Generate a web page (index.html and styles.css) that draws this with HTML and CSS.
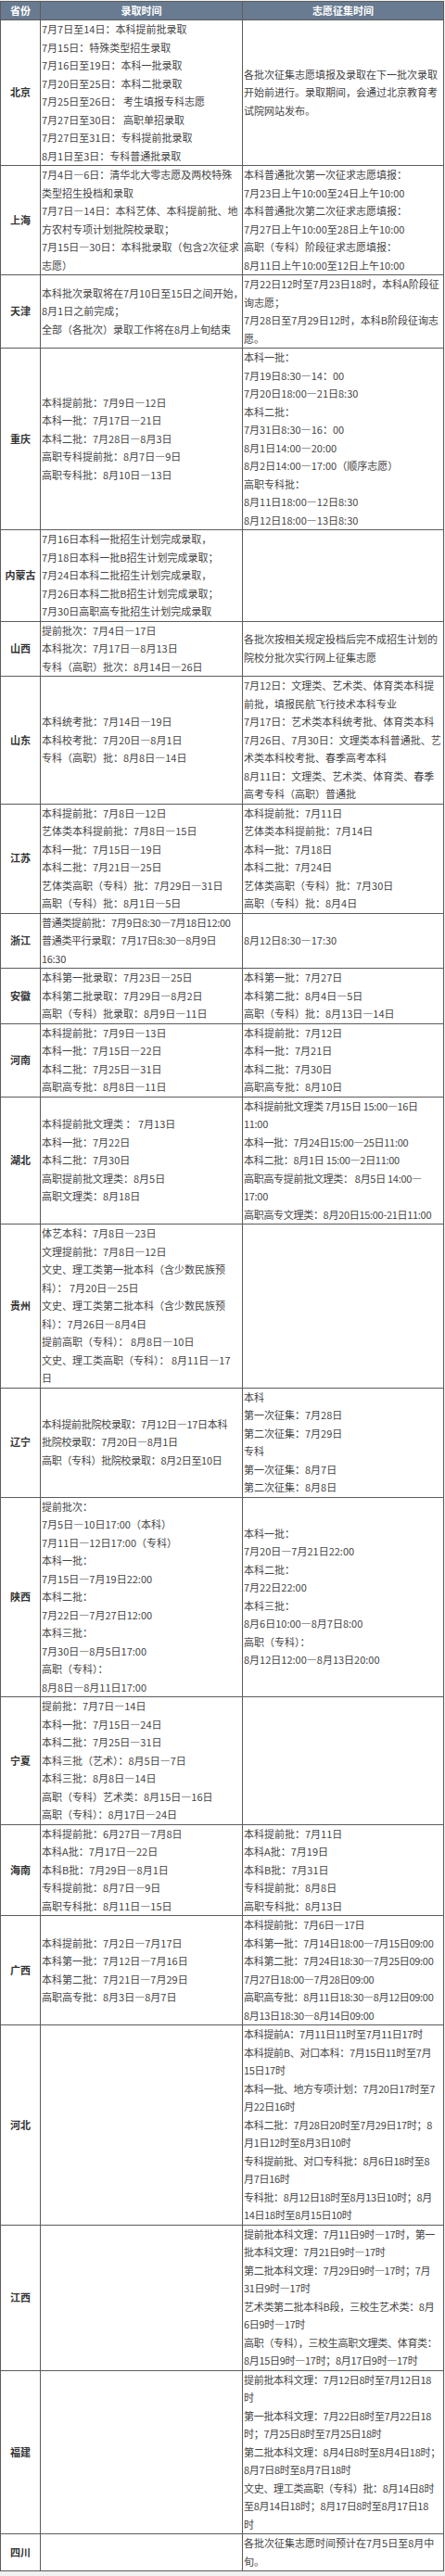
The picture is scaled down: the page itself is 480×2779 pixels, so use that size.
FILE: index.html
```html
<!DOCTYPE html>
<html lang="zh-CN">
<head>
<meta charset="utf-8">
<title>各省录取时间</title>
<link rel="stylesheet" href="styles.css">
</head>
<body>
<table class="sched">
<colgroup><col class="c-prov"><col class="c-adm"><col class="c-vol"></colgroup>
<thead>
<tr><th>省份</th><th>录取时间</th><th>志愿征集时间</th></tr>
</thead>
<tbody>
<tr>
<td class="prov">北京</td>
<td>7月7日至14日：本科提前批录取<br>7月15日：特殊类型招生录取<br>7月16日至19日：本科一批录取<br>7月20日至25日：本科二批录取<br>7月25日至26日： 考生填报专科志愿<br>7月27日至30日： 高职单招录取<br>7月27日至31日：专科提前批录取<br>8月1日至3日：专科普通批录取</td>
<td>各批次征集志愿填报及录取在下一批次录取<br>开始前进行。录取期间，会通过北京教育考<br>试院网站发布。</td>
</tr>
<tr>
<td class="prov">上海</td>
<td>7月4日—6日：清华北大零志愿及两校特殊<br>类型招生投档和录取<br>7月7日—14日：本科艺体、本科提前批、地<br>方农村专项计划批院校录取；<br>7月15日—30日：本科批录取（包含2次征求<br>志愿）</td>
<td>本科普通批次第一次征求志愿填报：<br>7月23日上午10:00至24日上午10:00<br>本科普通批次第二次征求志愿填报：<br>7月27日上午10:00至28日上午10:00<br>高职（专科）阶段征求志愿填报：<br>8月11日上午10:00至12日上午10:00</td>
</tr>
<tr>
<td class="prov">天津</td>
<td>本科批次录取将在7月10日至15日之间开始，<br>8月1日之前完成；<br>全部（各批次）录取工作将在8月上旬结束</td>
<td>7月22日12时至7月23日18时，本科A阶段征<br>询志愿；<br>7月28日至7月29日12时，本科B阶段征询志<br>愿。</td>
</tr>
<tr>
<td class="prov">重庆</td>
<td>本科提前批：7月9日—12日<br>本科一批：7月17日—21日<br>本科二批：7月28日—8月3日<br>高职专科提前批：8月7日—9日<br>高职专科批：8月10日—13日</td>
<td>本科一批：<br>7月19日8:30—14：00<br>7月20日18:00—21日8:30<br>本科二批：<br>7月31日8:30—16：00<br>8月1日14:00—20:00<br>8月2日14:00—17:00（顺序志愿）<br>高职专科批：<br>8月11日18:00—12日8:30<br>8月12日18:00—13日8:30</td>
</tr>
<tr>
<td class="prov">内蒙古</td>
<td>7月16日本科一批招生计划完成录取，<br>7月18日本科一批B招生计划完成录取；<br>7月24日本科二批招生计划完成录取，<br>7月26日本科二批B招生计划完成录取；<br>7月30日高职高专批招生计划完成录取</td>
<td></td>
</tr>
<tr>
<td class="prov">山西</td>
<td>提前批次：7月4日—17日<br>本科批次：7月17日—8月13日<br>专科（高职）批次：8月14日—26日</td>
<td>各批次按相关规定投档后完不成招生计划的<br>院校分批次实行网上征集志愿</td>
</tr>
<tr>
<td class="prov">山东</td>
<td>本科统考批：7月14日—19日<br>本科校考批：7月20日—8月1日<br>专科（高职）批：8月8日—14日</td>
<td>7月12日：文理类、艺术类、体育类本科提<br>前批，填报民航飞行技术本科专业<br>7月17日：艺术类本科统考批、体育类本科<br>7月26日、7月30日：文理类本科普通批、艺<br>术类本科校考批、春季高考本科<br>8月11日：文理类、艺术类、体育类、春季<br>高考专科（高职）普通批</td>
</tr>
<tr>
<td class="prov">江苏</td>
<td>本科提前批：7月8日—12日<br>艺体类本科提前批：7月8日—15日<br>本科一批：7月15日—19日<br>本科二批：7月21日—25日<br>艺体类高职（专科）批：7月29日—31日<br>高职（专科）批：8月1日—5日</td>
<td>本科提前批：7月11日<br>艺体类本科提前批：7月14日<br>本科一批：7月18日<br>本科二批：7月24日<br>艺体类高职（专科）批：7月30日<br>高职（专科）批：8月4日</td>
</tr>
<tr>
<td class="prov">浙江</td>
<td class="tight">普通类提前批：7月9日8:30—7月18日12:00<br>普通类平行录取：7月17日8:30—8月9日<br>16:30</td>
<td>8月12日8:30—17:30</td>
</tr>
<tr>
<td class="prov">安徽</td>
<td>本科第一批录取：7月23日—25日<br>本科第二批录取：7月29日—8月2日<br>高职（专科）批录取：8月9日—11日</td>
<td>本科第一批：7月27日<br>本科第二批：8月4日—5日<br>高职（专科）批：8月13日—14日</td>
</tr>
<tr>
<td class="prov">河南</td>
<td>本科提前批：7月9日—13日<br>本科一批：7月15日—22日<br>本科二批：7月25日—31日<br>高职高专批：8月8日—11日</td>
<td>本科提前批：7月12日<br>本科一批：7月21日<br>本科二批：7月30日<br>高职高专批：8月10日</td>
</tr>
<tr>
<td class="prov">湖北</td>
<td>本科提前批文理类 ： 7月13日<br>本科一批：7月22日<br>本科二批：7月30日<br>高职提前批文理类：8月5日<br>高职文理类：8月18日</td>
<td class="tight">本科提前批文理类 7月15日 15:00—16日<br>11:00<br>本科一批：7月24日15:00—25日11:00<br>本科二批：8月1日 15:00—2日11:00<br>高职高专提前批文理类： 8月5日 14:00—<br>17:00<br>高职高专文理类：8月20日15:00-21日11:00</td>
</tr>
<tr>
<td class="prov">贵州</td>
<td>体艺本科：7月8日—23日<br>文理提前批：7月8日—12日<br>文史、理工类第一批本科（含少数民族预<br>科）： 7月20日—25日<br>文史、理工类第二批本科（含少数民族预<br>科）：7月26日—8月4日<br>提前高职（专科）： 8月8日—10日<br>文史、理工类高职（专科）： 8月11日—17<br>日</td>
<td></td>
</tr>
<tr>
<td class="prov">辽宁</td>
<td class="tight">本科提前批院校录取：7月12日—17日本科<br>批院校录取：7月20日—8月1日<br>高职（专科）批院校录取：8月2日至10日</td>
<td>本科<br>第一次征集：7月28日<br>第二次征集：7月29日<br>专科<br>第一次征集：8月7日<br>第二次征集：8月8日</td>
</tr>
<tr>
<td class="prov">陕西</td>
<td>提前批次：<br>7月5日—10日17:00（本科）<br>7月11日—12日17:00（专科）<br>本科一批：<br>7月15日—7月19日22:00<br>本科二批：<br>7月22日—7月27日12:00<br>本科三批：<br>7月30日—8月5日17:00<br>高职（专科）：<br>8月8日—8月11日17:00</td>
<td>本科一批：<br>7月20日—7月21日22:00<br>本科二批：<br>7月22日22:00<br>本科三批：<br>8月6日10:00—8月7日8:00<br>高职（专科）：<br>8月12日12:00—8月13日20:00</td>
</tr>
<tr>
<td class="prov">宁夏</td>
<td>提前批：7月7日—14日<br>本科一批：7月15日—24日<br>本科二批：7月25日—31日<br>本科三批（艺术）：8月5日—7日<br>本科三批：8月8日—14日<br>高职（专科）艺术类：8月15日—16日<br>高职（专科）：8月17日—24日</td>
<td></td>
</tr>
<tr>
<td class="prov">海南</td>
<td>本科提前批：6月27日—7月8日<br>本科A批：7月17日—22日<br>本科B批：7月29日—8月1日<br>专科提前批：8月7日—9日<br>高职专科批：8月11日—15日</td>
<td>本科提前批：7月11日<br>本科A批：7月19日<br>本科B批：7月31日<br>专科提前批：8月8日<br>高职专科批：8月13日</td>
</tr>
<tr>
<td class="prov">广西</td>
<td>本科提前批：7月2日—7月17日<br>本科第一批：7月12日—7月16日<br>本科第二批：7月21日—7月29日<br>高职高专批：8月3日—8月7日</td>
<td class="tight">本科提前批：7月6日—17日<br>本科第一批：7月14日18:00—7月15日09:00<br>本科第二批：7月24日18:30—7月25日09:00<br>7月27日18:00—7月28日09:00<br>高职高专批：8月11日18:30—8月12日09:00<br>8月13日18:30—8月14日09:00</td>
</tr>
<tr>
<td class="prov">河北</td>
<td></td>
<td class="tight">本科提前A：7月11日11时至7月11日17时<br>本科提前B、对口本科：7月15日11时至7月<br>15日17时<br>本科一批、地方专项计划：7月20日17时至7<br>月22日16时<br>本科二批：7月28日20时至7月29日17时；8<br>月1日12时至8月3日10时<br>专科提前批、对口专科批：8月6日18时至8<br>月7日16时<br>专科批：8月12日18时至8月13日10时；8月<br>14日18时至8月15日10时</td>
</tr>
<tr>
<td class="prov">江西</td>
<td></td>
<td class="tight">提前批本科文理：7月11日9时—17时，第一<br>批本科文理：7月21日9时—17时<br>第二批本科文理：7月29日9时—17时；7月<br>31日9时—17时<br>艺术类第二批本科B段，三校生艺术类：8月<br>6日9时—17时<br>高职（专科），三校生高职文理类、体育类：<br>8月15日9时—17时；8月17日9时—17时</td>
</tr>
<tr>
<td class="prov">福建</td>
<td></td>
<td class="tight">提前批本科文理：7月12日8时至7月12日18<br>时<br>第一批本科文理：7月22日8时至7月22日18<br>时；7月25日8时至7月25日18时<br>第二批本科文理：8月4日8时至8月4日18时；<br>8月7日8时至8月7日18时<br>文史、理工类高职（专科）批：8月14日8时<br>至8月14日18时；8月17日8时至8月17日18<br>时</td>
</tr>
<tr>
<td class="prov">四川</td>
<td></td>
<td>各批次征集志愿时间预计在7月5日至8月中<br>旬。</td>
</tr>
</tbody>
</table>
</body>
</html>
```

FILE: styles.css
```css
html, body {
  margin: 0;
  padding: 0;
}

body {
  background: #f1f1f1;
  font-family: "Noto Sans CJK SC", "Noto Sans", sans-serif;
}

.sched {
  width: 479px;
  margin-top: 1px;
  border-collapse: collapse;
  table-layout: fixed;
  background: #ffffff;
  color: #454545;
  font-size: 11px;
  line-height: 19.5px;
}

.c-prov {
  width: 43px;
}

.c-adm {
  width: 218px;
}

.sched th {
  height: 19px;
  padding: 0;
  background: #687b91;
  color: #ffffff;
  font-weight: bold;
  font-size: 11px;
  line-height: 19px;
  text-align: center;
  border: 1px solid #5c5c5c;
}

.sched td {
  padding: 0 0 0 1px;
  border: 1px solid #5c5c5c;
  vertical-align: middle;
  text-align: left;
  white-space: nowrap;
  overflow: hidden;
}

.sched td.tight {
  letter-spacing: -0.3px;
}

.sched td.prov {
  padding: 0;
  text-align: center;
  font-weight: bold;
  color: #333333;
}
```
